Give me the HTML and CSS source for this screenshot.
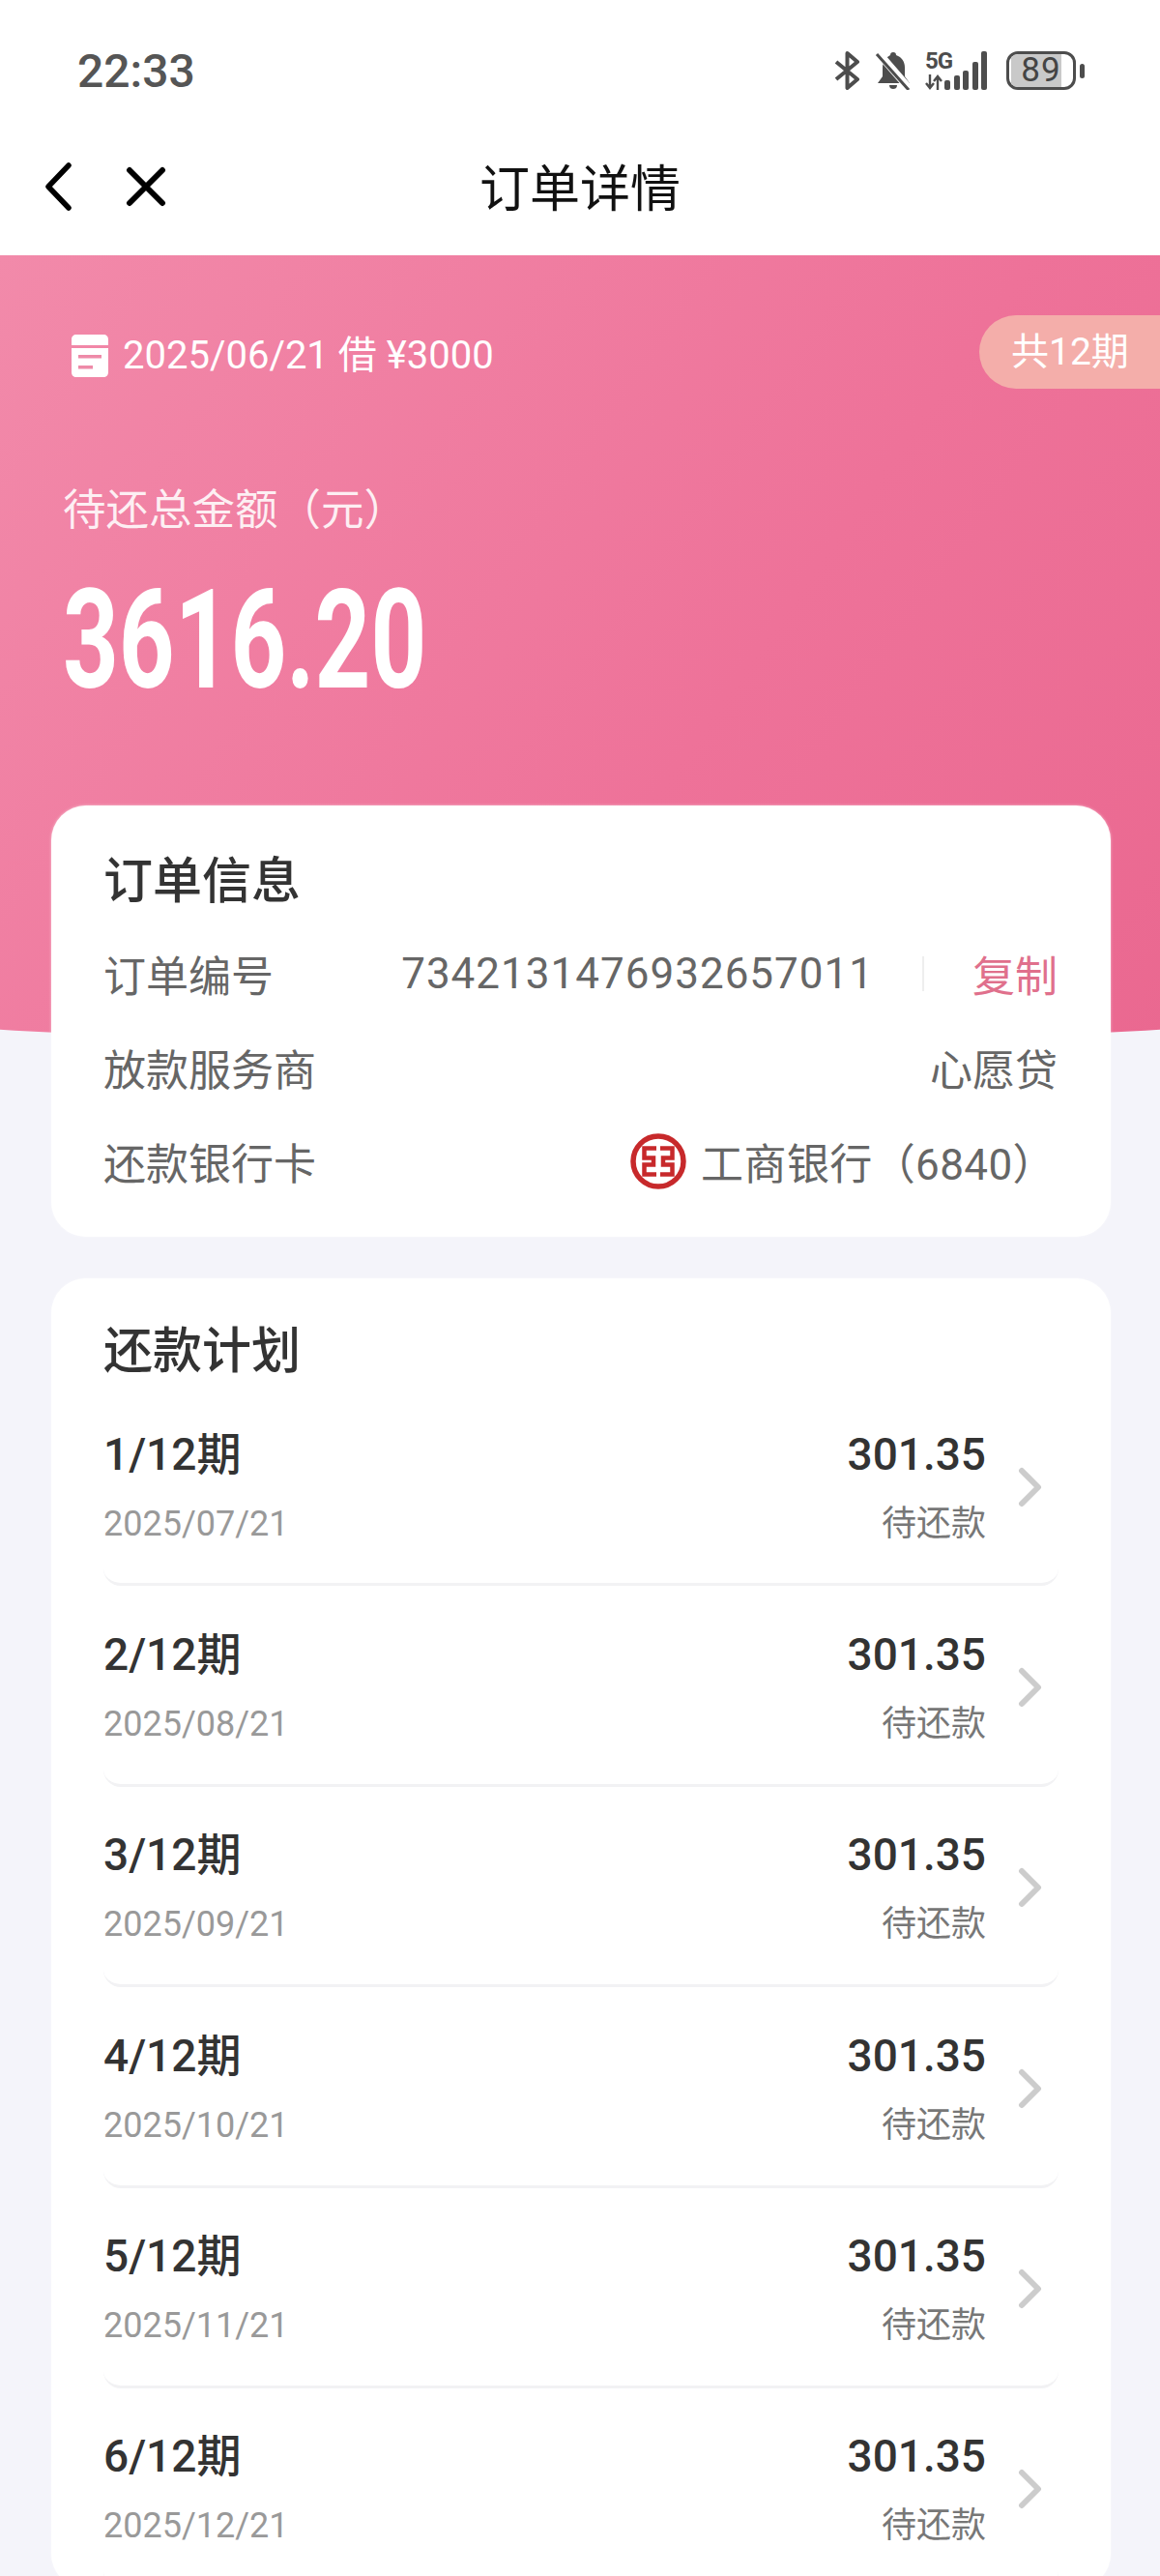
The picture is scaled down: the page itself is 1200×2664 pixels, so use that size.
FILE: index.html
```html
<!DOCTYPE html>
<html lang="zh-CN">
  <head>
    <meta charset="UTF-8" />
    <meta name="viewport" content="width=device-width, initial-scale=1.0" />
    <title>订单详情</title>
    <link rel="stylesheet" href="styles.css">
  </head>
  <body>
    <div class="status-bar">
      <span class="time">22:33</span>
      <div class="status-icons">
        <svg class="icon-bt" width="27" height="40" viewBox="0 0 27 40">
          <path d="M2 11 L24 29 L13.5 38 V2 L24 11 L2 29" fill="none" stroke="#4d4d4d" stroke-width="4" stroke-linejoin="round" />
        </svg>
        <svg class="icon-bell" width="38" height="40" viewBox="0 0 38 40">
          <path d="M19 1 C21 1 22 2 22 4 C28 6 31 11 31 17 V26 L36 33 H3 L8 26 V17 C8 11 12 6 16 4 C16 2 17 1 19 1 Z M15 35 H23 C23 38 21 39 19 39 C17 39 15 38 15 35 Z" fill="#4d4d4d" />
          <path d="M3 1 L36 39" stroke="#fff" stroke-width="8" />
          <path d="M2 3 L35 40" stroke="#4d4d4d" stroke-width="3" />
        </svg>
        <div class="signal">
          <span class="net">5G</span>
          <svg class="arrows" width="18" height="16" viewBox="0 0 18 16">
            <path d="M5 0 V14 M1 9 L5 14 L9 9 M13 16 V2 M9 7 L13 2 L17 7" fill="none" stroke="#4d4d4d" stroke-width="2.4" />
          </svg>
          <i class="bar b1"></i><i class="bar b2"></i><i class="bar b3"></i><i class="bar b4"></i><i class="bar b5"></i>
        </div>
        <div class="battery">
          <div class="battery-body"><div class="battery-fill"></div><span class="battery-num">89</span></div>
          <div class="battery-cap"></div>
        </div>
      </div>
    </div>

    <div class="nav">
      <div class="nav-btns">
        <svg width="30" height="50" viewBox="0 0 30 50">
          <path d="M26 3 L5 25 L26 47" fill="none" stroke="#000" stroke-width="5.5" stroke-linecap="round" stroke-linejoin="round" />
        </svg>
        <svg width="42" height="42" viewBox="0 0 42 42">
          <path d="M4 4 L38 38 M38 4 L4 38" fill="none" stroke="#000" stroke-width="6" stroke-linecap="round" />
        </svg>
      </div>
      <h1 class="nav-title">订单详情</h1>
    </div>

    <div class="hero">
      <div class="hero-top">
        <div class="hero-date">
          <svg width="38" height="44" viewBox="0 0 38 44">
            <path d="M5 0 H33 C36 0 38 2 38 5 V11 H0 V5 C0 2 2 0 5 0 Z M0 14 H38 V39 C38 42 36 44 33 44 H5 C2 44 0 42 0 39 Z" fill="#fff" />
            <rect x="7" y="21" width="24" height="3.5" fill="#ee8aa8" />
            <rect x="7" y="32" width="15" height="3.5" fill="#ee8aa8" />
          </svg>
          <span>2025/06/21 借 ¥3000</span>
        </div>
        <div class="hero-pill">共12期</div>
      </div>
      <div class="hero-label">待还总金额（元）</div>
      <div class="hero-amount"><span>3616.20</span></div>
    </div>

    <div class="content">
      <section class="card info-card">
        <h2 class="card-title">订单信息</h2>
        <div class="info-row">
          <span class="info-label">订单编号</span>
          <div class="info-value">
            <span class="order-no">7342131476932657011</span>
            <i class="divider"></i>
            <span class="copy">复制</span>
          </div>
        </div>
        <div class="info-row">
          <span class="info-label">放款服务商</span>
          <div class="info-value">心愿贷</div>
        </div>
        <div class="info-row">
          <span class="info-label">还款银行卡</span>
          <div class="info-value bank">
            <svg width="58" height="58" viewBox="0 0 58 58">
              <circle cx="29" cy="29" r="26" fill="#fff" stroke="#c7292b" stroke-width="5.5" />
              <path d="M27 15.5 H14.5 V25.5 H24 V32.5 H14.5 V42.5 H27 M31 15.5 H43.5 V25.5 H34 V32.5 H43.5 V42.5 H31" fill="none" stroke="#c7292b" stroke-width="4.5" />
            </svg>
            <span class="bank-name">工商银行（6840）</span>
          </div>
        </div>
      </section>

      <section class="card plan-card">
        <h2 class="card-title">还款计划</h2>

        <div class="plan-row">
          <div class="plan-left"><div class="plan-name">1/12期</div><div class="plan-date">2025/07/21</div></div>
          <div class="plan-right"><div class="plan-amount">301.35</div><div class="plan-status">待还款</div></div>
          <svg class="chevron" width="26" height="42" viewBox="0 0 26 42"><path d="M4 4 L21 21 L4 38" fill="none" stroke="#ccc" stroke-width="6" stroke-linecap="round" stroke-linejoin="round" /></svg>
        </div>
        <div class="plan-row">
          <div class="plan-left"><div class="plan-name">2/12期</div><div class="plan-date">2025/08/21</div></div>
          <div class="plan-right"><div class="plan-amount">301.35</div><div class="plan-status">待还款</div></div>
          <svg class="chevron" width="26" height="42" viewBox="0 0 26 42"><path d="M4 4 L21 21 L4 38" fill="none" stroke="#ccc" stroke-width="6" stroke-linecap="round" stroke-linejoin="round" /></svg>
        </div>
        <div class="plan-row">
          <div class="plan-left"><div class="plan-name">3/12期</div><div class="plan-date">2025/09/21</div></div>
          <div class="plan-right"><div class="plan-amount">301.35</div><div class="plan-status">待还款</div></div>
          <svg class="chevron" width="26" height="42" viewBox="0 0 26 42"><path d="M4 4 L21 21 L4 38" fill="none" stroke="#ccc" stroke-width="6" stroke-linecap="round" stroke-linejoin="round" /></svg>
        </div>
        <div class="plan-row">
          <div class="plan-left"><div class="plan-name">4/12期</div><div class="plan-date">2025/10/21</div></div>
          <div class="plan-right"><div class="plan-amount">301.35</div><div class="plan-status">待还款</div></div>
          <svg class="chevron" width="26" height="42" viewBox="0 0 26 42"><path d="M4 4 L21 21 L4 38" fill="none" stroke="#ccc" stroke-width="6" stroke-linecap="round" stroke-linejoin="round" /></svg>
        </div>
        <div class="plan-row">
          <div class="plan-left"><div class="plan-name">5/12期</div><div class="plan-date">2025/11/21</div></div>
          <div class="plan-right"><div class="plan-amount">301.35</div><div class="plan-status">待还款</div></div>
          <svg class="chevron" width="26" height="42" viewBox="0 0 26 42"><path d="M4 4 L21 21 L4 38" fill="none" stroke="#ccc" stroke-width="6" stroke-linecap="round" stroke-linejoin="round" /></svg>
        </div>
        <div class="plan-row">
          <div class="plan-left"><div class="plan-name">6/12期</div><div class="plan-date">2025/12/21</div></div>
          <div class="plan-right"><div class="plan-amount">301.35</div><div class="plan-status">待还款</div></div>
          <svg class="chevron" width="26" height="42" viewBox="0 0 26 42"><path d="M4 4 L21 21 L4 38" fill="none" stroke="#ccc" stroke-width="6" stroke-linecap="round" stroke-linejoin="round" /></svg>
        </div>
      </section>
    </div>
  </body>
</html>
```

FILE: styles.css
```css
html,
body {
  margin: 0;
  height: 2664px;
  overflow: hidden;
}
body {
  background-color: #f4f4fa;
  font-family: Roboto, "Noto Sans CJK SC", sans-serif;
  color: #333;
}

/* status bar */
.status-bar {
  height: 132px;
  background-color: #fff;
  display: flex;
  justify-content: space-between;
  align-items: center;
  padding: 14px 78px 0 80px;
  box-sizing: border-box;
}
.time {
  font-size: 48px;
  font-weight: 500;
  color: #555;
}
.status-icons {
  display: flex;
  align-items: center;
  height: 40px;
}
.icon-bt {
  margin-right: 15px;
}
.icon-bell {
  margin-right: 14px;
}
.signal {
  position: relative;
  width: 66px;
  height: 40px;
  display: flex;
  align-items: flex-end;
  gap: 3.5px;
  padding-left: 20px;
  box-sizing: border-box;
  margin-right: 18px;
}
.net {
  position: absolute;
  left: 0;
  top: 0;
  font-size: 24px;
  line-height: 20px;
  font-weight: 700;
  letter-spacing: -1px;
  color: #4d4d4d;
}
.arrows {
  position: absolute;
  left: 0;
  bottom: 0;
}
.bar {
  display: block;
  width: 6px;
  background-color: #4d4d4d;
  border-radius: 2px;
}
.b1 { height: 10px; }
.b2 { height: 15px; }
.b3 { height: 20px; }
.b4 { height: 29px; }
.b5 { height: 40px; }
.battery {
  display: flex;
  align-items: center;
  gap: 4px;
}
.battery-body {
  position: relative;
  width: 72px;
  height: 40px;
  border: 3.5px solid #4d4d4d;
  border-radius: 12px;
  box-sizing: border-box;
  overflow: hidden;
}
.battery-fill {
  width: 52px;
  height: 100%;
  background-color: #c9c9c9;
  margin-left: 2px;
}
.battery-num {
  position: absolute;
  left: 0;
  right: 0;
  top: 0;
  text-align: center;
  font-size: 35px;
  line-height: 33px;
  color: #444;
  letter-spacing: 1px;
}
.battery-cap {
  width: 5px;
  height: 15px;
  background-color: #4d4d4d;
  border-radius: 3px;
}

/* nav */
.nav {
  position: relative;
  height: 132px;
  background-color: #fff;
  display: flex;
  align-items: center;
  justify-content: center;
}
.nav-btns {
  position: absolute;
  left: 45px;
  top: 36px;
  display: flex;
  align-items: center;
  gap: 55px;
}
.nav-title {
  margin: 0;
  font-size: 52px;
  font-weight: 400;
  color: #111;
  margin-top: -14px;
}

/* pink header */
.hero {
  height: 830px;
  padding-left: 65px;
  box-sizing: border-box;
  background: linear-gradient(125deg, #f28aaa 0%, #ee7299 60%, #ea6890 100%);
  clip-path: ellipse(3000px 800px at 50% 17px);
  color: #fff;
}
.hero-top {
  display: flex;
  justify-content: space-between;
  align-items: flex-start;
  padding-top: 62px;
}
.hero-date {
  display: flex;
  align-items: center;
  gap: 15px;
  margin-left: 9px;
  margin-top: 20px;
  font-size: 40px;
  line-height: 44px;
}
.hero-pill {
  width: 187px;
  height: 76px;
  box-sizing: border-box;
  padding-left: 33px;
  background-color: #f4aeaa;
  border-radius: 38px 0 0 38px;
  font-size: 39px;
  line-height: 76px;
}
.hero-label {
  margin-top: 96px;
  font-size: 44.5px;
  line-height: 60px;
  color: rgba(255, 255, 255, 0.88);
}
.hero-amount {
  margin-top: 29px;
  font-size: 143px;
  font-weight: 700;
  line-height: 150px;
}
.hero-amount span {
  display: inline-block;
  transform: scaleX(0.705);
  transform-origin: left center;
}

/* cards */
.content {
  margin-top: -261px;
  padding: 0 51px 0 53px;
  position: relative;
}
.card {
  background-color: #fff;
  border-radius: 36px;
  box-shadow: 0 0 3px rgba(255, 255, 255, 0.6);
}
.info-card {
  height: 446px;
  padding: 51px 55px 0 54px;
  box-sizing: border-box;
  margin-bottom: 43px;
}
.card-title {
  margin: 0;
  font-size: 51px;
  line-height: 56px;
  font-weight: 500;
  color: #333;
}
.info-card .card-title {
  margin-bottom: 21px;
}
.info-row {
  display: flex;
  justify-content: space-between;
  align-items: center;
  height: 97px;
  padding-bottom: 6px;
  box-sizing: border-box;
  font-size: 44px;
  color: #666;
}
.info-value {
  display: flex;
  align-items: center;
}
.order-no {
  letter-spacing: 1px;
}
.divider {
  display: block;
  width: 2px;
  height: 36px;
  background-color: #eee;
  margin: 0 50px;
}
.copy {
  color: #e0708c;
}
.bank {
  gap: 15px;
  margin-right: 2px;
}
.bank-name {
  letter-spacing: 0.4px;
}
.plan-card {
  padding: 48px 54px 0 54px;
}
.plan-card .card-title {
  margin-bottom: 7px;
}
.plan-row {
  display: flex;
  align-items: center;
  height: 207.4px;
  box-sizing: border-box;
  padding: 35px 0 26.4px;
  border-bottom: 3px solid #f2f2f4;
  border-radius: 0 0 18px 18px;
}
.plan-left {
  flex: 1;
}
.plan-name,
.plan-amount {
  font-size: 46px;
  line-height: 72px;
  font-weight: 500;
  color: #333;
}
.plan-date {
  font-size: 36px;
  line-height: 72px;
  color: #999;
}
.plan-right {
  text-align: right;
}
.plan-status {
  font-size: 36px;
  line-height: 72px;
  color: #777;
}
.chevron {
  margin: -4px 16px 0 33px;
}
```
